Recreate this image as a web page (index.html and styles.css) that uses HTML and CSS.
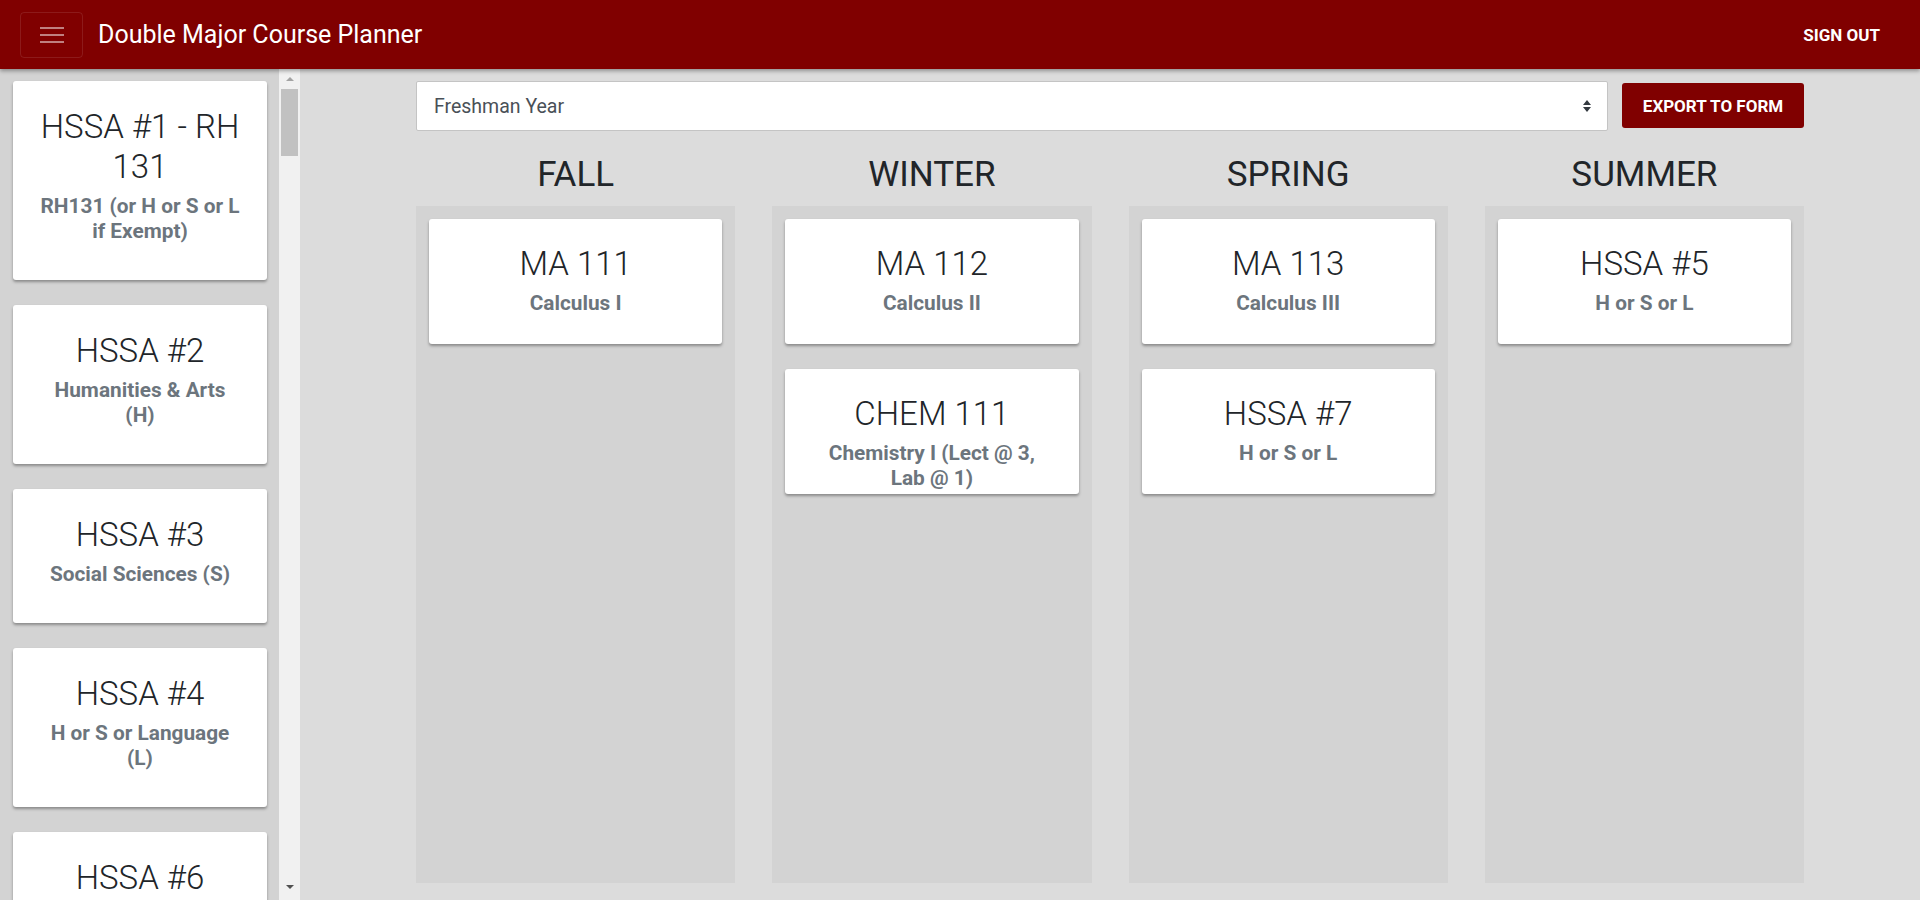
FILE: index.html
```html
<!DOCTYPE html>
<html lang="en">
<head>
<meta charset="utf-8">
<title>Double Major Course Planner</title>
<link rel="stylesheet" href="styles.css">
</head>
<body>
<header class="topbar">
  <button class="toggler" aria-label="Toggle navigation">
    <svg width="24" height="18" viewBox="0 0 24 18" aria-hidden="true">
      <path d="M0 2h24M0 9h24M0 16h24" stroke="rgba(255,255,255,0.5)" stroke-width="2" fill="none"/>
    </svg>
  </button>
  <span class="brand">Double Major Course Planner</span>
  <a class="signout" href="#">SIGN OUT</a>
</header>
<div class="layout">
  <aside class="sidebar">
    <div class="pool">
      <div class="card pool-card">
        <div class="card-title">HSSA #1 - RH 131</div>
        <div class="card-sub">RH131 (or H or S or L if Exempt)</div>
      </div>
      <div class="card pool-card">
        <div class="card-title">HSSA #2</div>
        <div class="card-sub">Humanities &amp; Arts (H)</div>
      </div>
      <div class="card pool-card">
        <div class="card-title">HSSA #3</div>
        <div class="card-sub">Social Sciences (S)</div>
      </div>
      <div class="card pool-card">
        <div class="card-title">HSSA #4</div>
        <div class="card-sub">H or S or Language (L)</div>
      </div>
      <div class="card pool-card">
        <div class="card-title">HSSA #6</div>
        <div class="card-sub">H or S or L</div>
      </div>
    </div>
    <div class="scrollbar" aria-hidden="true">
      <div class="sb-btn"><span class="tri-up"></span></div>
      <div class="sb-thumb"></div>
      <div class="sb-track"></div>
      <div class="sb-btn sb-btn-bottom"><span class="tri-down"></span></div>
    </div>
  </aside>
  <main class="main">
    <div class="container">
      <div class="toolbar">
        <div class="select" role="combobox">
          <span class="select-text">Freshman Year</span>
          <svg class="select-arrows" width="8" height="12" viewBox="0 0 8 12" aria-hidden="true">
            <path d="M0 5L4 0L8 5Z M0 7L4 12L8 7Z" fill="#343a40"/>
          </svg>
        </div>
        <button class="export">EXPORT TO FORM</button>
      </div>
      <div class="terms">
        <section class="term">
          <h2 class="term-name">FALL</h2>
          <div class="term-body">
            <div class="card course-card">
              <div class="card-title">MA 111</div>
              <div class="card-sub">Calculus I</div>
            </div>
          </div>
        </section>
        <section class="term">
          <h2 class="term-name">WINTER</h2>
          <div class="term-body">
            <div class="card course-card">
              <div class="card-title">MA 112</div>
              <div class="card-sub">Calculus II</div>
            </div>
            <div class="card course-card">
              <div class="card-title">CHEM 111</div>
              <div class="card-sub">Chemistry I (Lect @ 3, Lab @ 1)</div>
            </div>
          </div>
        </section>
        <section class="term">
          <h2 class="term-name">SPRING</h2>
          <div class="term-body">
            <div class="card course-card">
              <div class="card-title">MA 113</div>
              <div class="card-sub">Calculus III</div>
            </div>
            <div class="card course-card">
              <div class="card-title">HSSA #7</div>
              <div class="card-sub">H or S or L</div>
            </div>
          </div>
        </section>
        <section class="term">
          <h2 class="term-name">SUMMER</h2>
          <div class="term-body">
            <div class="card course-card">
              <div class="card-title">HSSA #5</div>
              <div class="card-sub">H or S or L</div>
            </div>
          </div>
        </section>
      </div>
    </div>
  </main>
</div>
</body>
</html>
```

FILE: styles.css
```css
* {
  box-sizing: border-box;
}

html, body {
  margin: 0;
  height: 100%;
}

body {
  font-family: Roboto, "Liberation Sans", Arial, sans-serif;
  color: #212529;
  background: #dcdcdc;
  height: 900px;
  overflow: hidden;
  display: flex;
  flex-direction: column;
}

/* ---------- top bar ---------- */
.topbar {
  height: 69px;
  flex: 0 0 69px;
  background: #800000;
  display: flex;
  align-items: center;
  padding: 0 40px 0 20px;
  box-shadow: 0 2px 4px rgba(0, 0, 0, 0.35);
  position: relative;
  z-index: 2;
}

.toggler {
  width: 63px;
  height: 46px;
  margin: 0;
  padding: 0;
  border: 1px solid rgba(255, 255, 255, 0.1);
  border-radius: 4px;
  background: transparent;
  display: flex;
  align-items: center;
  justify-content: center;
}

.toggler svg {
  display: block;
  margin-top: 1px;
}

.brand {
  margin-left: 15px;
  color: #fff;
  font-size: 25px;
  line-height: 30px;
  font-weight: 400;
}

.signout {
  margin-left: auto;
  color: #fff;
  text-decoration: none;
  font-size: 17px;
  font-weight: 700;
  line-height: 20px;
}

/* ---------- layout ---------- */
.layout {
  flex: 1;
  display: flex;
  min-height: 0;
}

.sidebar {
  width: 300px;
  flex: 0 0 300px;
  display: flex;
  background: #d3d3d3;
}

.pool {
  width: 279px;
  padding: 12px 12px 0 13px;
  display: flex;
  flex-direction: column;
  gap: 25px;
  overflow: hidden;
}

.scrollbar {
  width: 21px;
  background: #f1f1f1;
  display: flex;
  flex-direction: column;
  align-items: center;
}

.sb-btn {
  height: 20px;
  width: 100%;
  display: flex;
  align-items: center;
  justify-content: center;
  flex: 0 0 20px;
}

.sb-btn-bottom {
  height: 26px;
  flex-basis: 26px;
}

.tri-up {
  width: 0;
  height: 0;
  border-left: 4px solid transparent;
  border-right: 4px solid transparent;
  border-bottom: 4px solid #a3a3a3;
}

.tri-down {
  width: 0;
  height: 0;
  border-left: 4px solid transparent;
  border-right: 4px solid transparent;
  border-top: 4px solid #505050;
}

.sb-thumb {
  width: 17px;
  height: 67px;
  background: #c1c1c1;
}

.sb-track {
  flex: 1;
}

/* ---------- cards ---------- */
.card {
  background: #fff;
  border-radius: 3px;
  box-shadow: 0 2px 3px rgba(0, 0, 0, 0.35);
  text-align: center;
  flex: 0 0 auto;
}

.pool-card {
  padding: 26px 25px 36px;
}

.course-card {
  height: 125px;
  padding: 25px 25px 0;
}

.card-title {
  font-size: 33px;
  line-height: 40px;
  font-weight: 300;
  color: #212529;
  margin-bottom: 7px;
}

.card-sub {
  font-size: 20.8px;
  line-height: 25px;
  font-weight: 700;
  color: #6c757d;
}

/* ---------- main ---------- */
.main {
  flex: 1;
  min-width: 0;
  display: flex;
  justify-content: center;
}

.container {
  width: 1388px;
  padding: 12px 0 17px;
  display: flex;
  flex-direction: column;
}

.toolbar {
  display: flex;
  align-items: flex-start;
  gap: 14px;
  height: 50px;
  flex: 0 0 50px;
}

.select {
  flex: 1;
  height: 50px;
  background: #fff;
  border: 1px solid #c4c4c4;
  border-radius: 2px;
  display: flex;
  align-items: center;
  padding: 0 16px 0 17px;
}

.select-text {
  font-size: 19.5px;
  color: #495057;
  flex: 1;
}

.select-arrows {
  display: block;
}

.export {
  margin: 2px 0 0;
  width: 182px;
  height: 45px;
  border: none;
  border-radius: 3px;
  background: #800000;
  color: #fff;
  font-family: Roboto, "Liberation Sans", Arial, sans-serif;
  font-size: 17px;
  font-weight: 700;
  padding: 0;
}

.terms {
  flex: 1;
  margin-top: 23px;
  display: grid;
  grid-template-columns: repeat(4, 1fr);
  column-gap: 37px;
  min-height: 0;
}

.term {
  display: flex;
  flex-direction: column;
  min-height: 0;
}

.term-name {
  margin: 0 0 10px;
  font-size: 35px;
  line-height: 42px;
  font-weight: 400;
  text-align: center;
  color: #212529;
}

.term-body {
  flex: 1;
  background: #d3d3d3;
  padding: 13px;
  display: flex;
  flex-direction: column;
  gap: 25px;
}
```
